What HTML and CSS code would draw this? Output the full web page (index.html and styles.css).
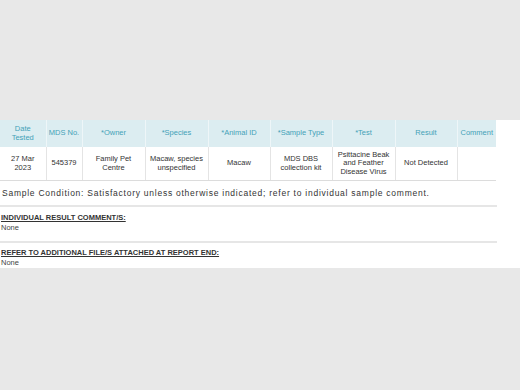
FILE: index.html
```html
<!DOCTYPE html>
<html>
<head>
<meta charset="utf-8">
<link rel="stylesheet" href="styles.css">
</head>
<body>
<main class="sheet">
  <table class="results">
    <colgroup>
      <col class="c-date"><col class="c-mds"><col class="c-wide"><col class="c-wide"><col class="c-mid"><col class="c-mid"><col class="c-wide"><col class="c-mid"><col class="c-comment">
    </colgroup>
    <thead>
      <tr>
        <th>Date<br>Tested</th>
        <th>MDS No.</th>
        <th>*Owner</th>
        <th>*Species</th>
        <th>*Animal ID</th>
        <th>*Sample Type</th>
        <th>*Test</th>
        <th>Result</th>
        <th>Comment</th>
      </tr>
    </thead>
    <tbody>
      <tr>
        <td>27 Mar<br>2023</td>
        <td>545379</td>
        <td>Family Pet<br>Centre</td>
        <td>Macaw, species<br>unspecified</td>
        <td>Macaw</td>
        <td>MDS DBS<br>collection kit</td>
        <td>Psittacine Beak<br>and Feather<br>Disease Virus</td>
        <td>Not Detected</td>
        <td></td>
      </tr>
    </tbody>
  </table>
  <p class="note">Sample Condition: Satisfactory unless otherwise indicated; refer to individual sample comment.</p>
  <section class="block">
    <h2 class="block-title">INDIVIDUAL RESULT COMMENT/S:</h2>
    <p class="block-text">None</p>
  </section>
  <section class="block last">
    <h2 class="block-title">REFER TO ADDITIONAL FILE/S ATTACHED AT REPORT END:</h2>
    <p class="block-text">None</p>
  </section>
</main>
</body>
</html>
```

FILE: styles.css
```css
html, body {
  margin: 0;
  padding: 0;
}
body {
  background: #e8e8e8;
  padding-top: 120px;
  font-family: "Liberation Sans", Arial, sans-serif;
  color: #333;
}
.sheet {
  background: #fff;
  width: 520px;
  height: 148px;
  overflow: hidden;
}
.results {
  width: 496px;
  table-layout: fixed;
  border-collapse: collapse;
  font-size: 7.5px;
  line-height: 8.5px;
}
.c-date { width: 46px; }
.c-mds { width: 36px; }
.c-wide { width: 63px; }
.c-mid { width: 62px; }
.c-comment { width: 39px; }
.results th {
  background: #dcedf1;
  color: #44a2b8;
  font-weight: normal;
  height: 27px;
  padding: 0 1px;
  border-left: 1px solid #eef6f8;
  text-align: center;
  vertical-align: middle;
}
.results th:first-child,
.results td:first-child {
  border-left: none;
}
.results td {
  height: 33px;
  padding: 0 1px;
  text-align: center;
  vertical-align: middle;
  color: #333;
  border-left: 1px solid #e4e4e4;
  border-bottom: 1px solid #dcdcdc;
}
.note {
  margin: 0;
  width: 495px;
  padding: 7px 0 7px 2px;
  font-size: 8.5px;
  letter-spacing: 0.75px;
  line-height: 10px;
  color: #333;
  border-bottom: 2px solid #e6e6e6;
  white-space: nowrap;
}
.block {
  width: 497px;
  padding: 6px 0 8px 0;
  border-bottom: 2px solid #e6e6e6;
}
.block.last {
  padding: 5px 0 0 0;
  border-bottom: none;
}
.block-title {
  margin: 0;
  padding-left: 1px;
  font-size: 7.5px;
  line-height: 10px;
  font-weight: bold;
  text-decoration: underline;
  color: #333;
}
.block-text {
  margin: 0;
  padding-left: 1px;
  font-size: 7.5px;
  line-height: 10px;
  color: #444;
}
```
